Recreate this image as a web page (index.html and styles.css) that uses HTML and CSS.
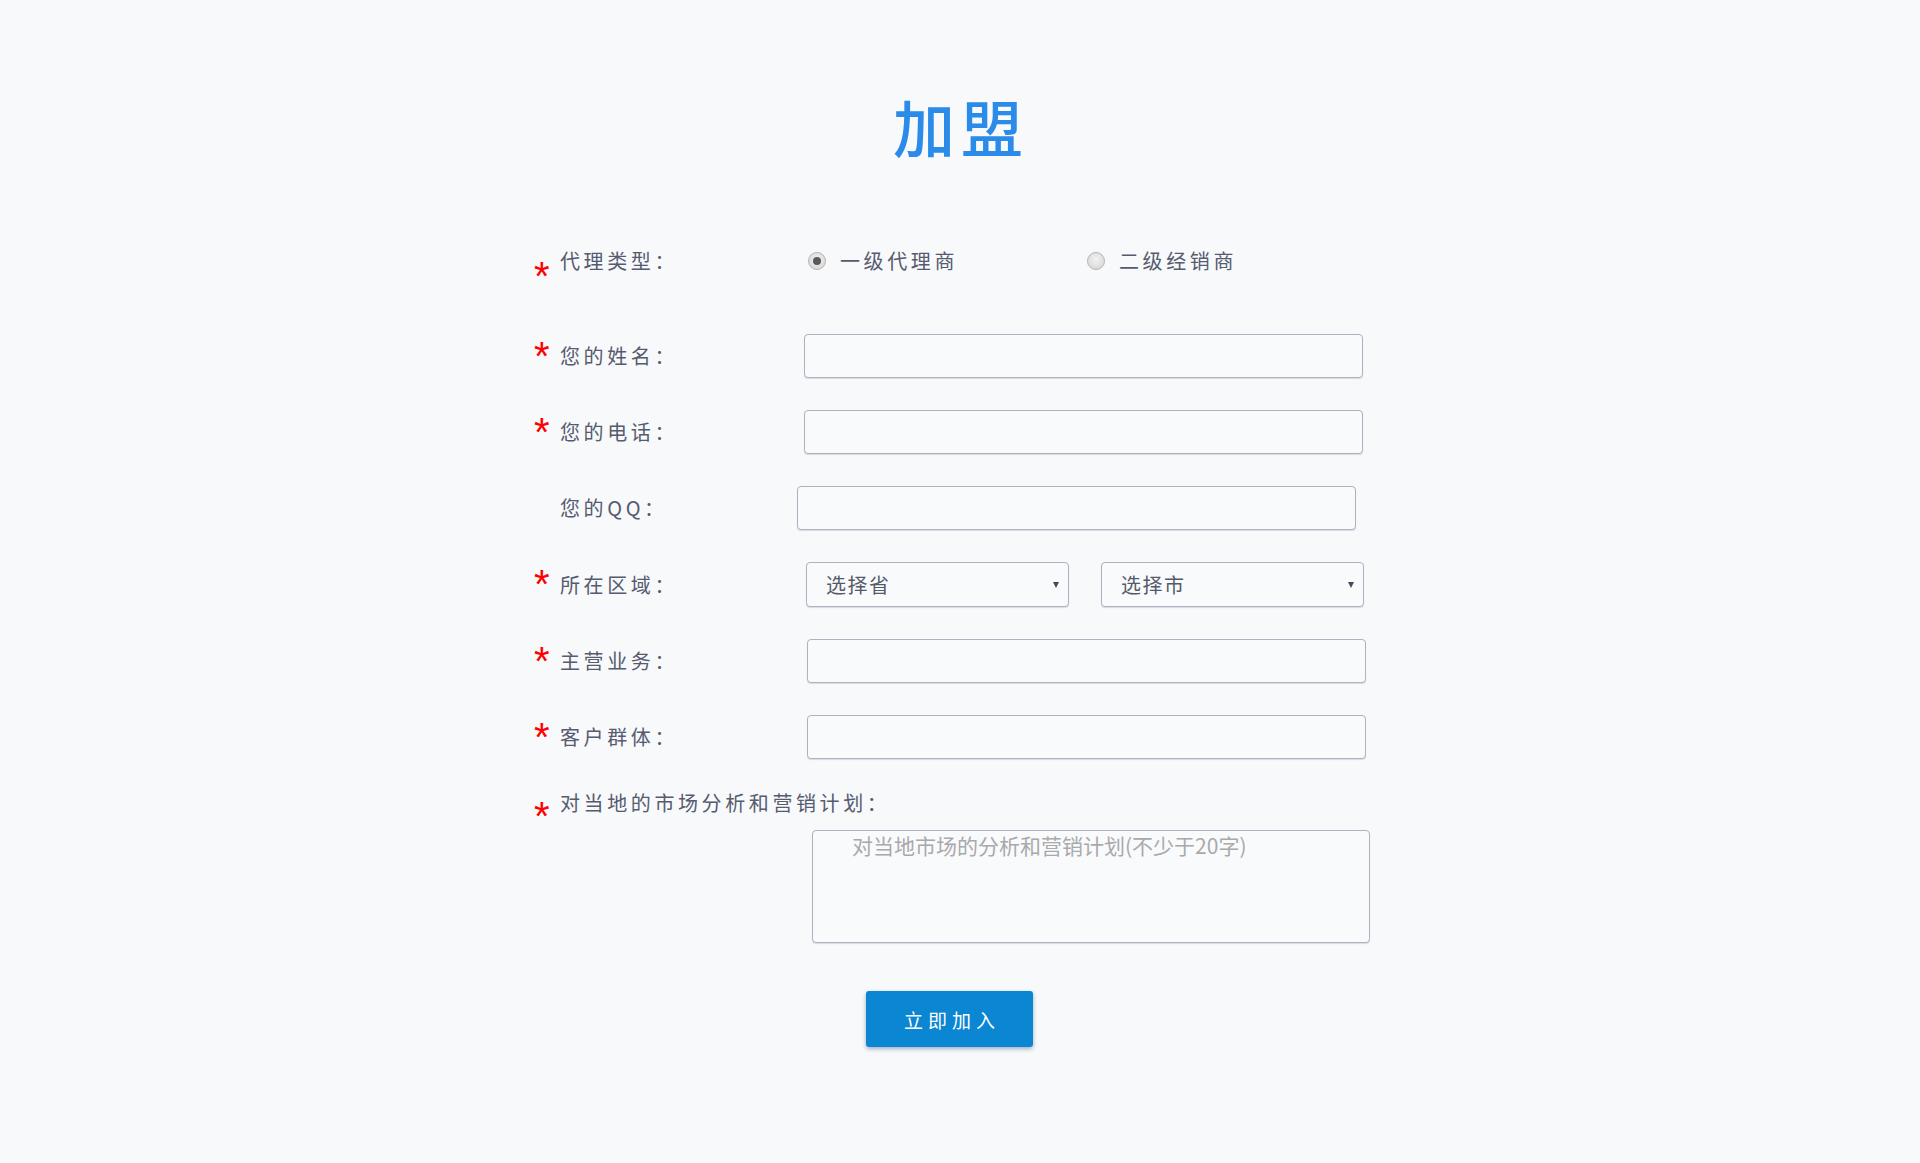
FILE: index.html
```html
<!DOCTYPE html>
<html lang="zh-CN">
<head>
<meta charset="utf-8">
<title>加盟</title>
<link rel="stylesheet" href="styles.css">
</head>
<body>
<div class="page">
  <h1 class="title">加盟</h1>
  <form class="form">
    <div class="row row-type">
      <div class="lab"><span class="star star-low">*</span><span class="lab-text">代理类型：</span></div>
      <div class="radios">
        <label class="opt opt-first"><input type="radio" name="type" class="radio" checked><span class="opt-text">一级代理商</span></label>
        <label class="opt"><input type="radio" name="type" class="radio"><span class="opt-text">二级经销商</span></label>
      </div>
    </div>
    <div class="row">
      <div class="lab"><span class="star">*</span><span class="lab-text">您的姓名：</span></div>
      <input type="text" class="input">
    </div>
    <div class="row">
      <div class="lab"><span class="star">*</span><span class="lab-text">您的电话：</span></div>
      <input type="text" class="input">
    </div>
    <div class="row">
      <div class="lab"><span class="star star-empty"></span><span class="lab-text">您的QQ：</span></div>
      <input type="text" class="input input-qq">
    </div>
    <div class="row">
      <div class="lab"><span class="star">*</span><span class="lab-text">所在区域：</span></div>
      <div class="selects">
        <span class="sel"><select class="select"><option>选择省</option></select></span>
        <span class="sel"><select class="select"><option>选择市</option></select></span>
      </div>
    </div>
    <div class="row">
      <div class="lab"><span class="star">*</span><span class="lab-text">主营业务：</span></div>
      <input type="text" class="input input-biz">
    </div>
    <div class="row">
      <div class="lab"><span class="star">*</span><span class="lab-text">客户群体：</span></div>
      <input type="text" class="input input-biz">
    </div>
    <div class="row row-plan">
      <div class="lab lab-wide"><span class="star star-mid">*</span><span class="lab-text">对当地的市场分析和营销计划：</span></div>
    </div>
    <textarea class="area" placeholder="对当地市场的分析和营销计划(不少于20字)"></textarea>
    <button type="button" class="btn">立即加入</button>
  </form>
</div>
</body>
</html>
```
FILE: styles.css
```css
* { box-sizing: border-box; }
html, body { margin: 0; padding: 0; }
body {
  background: #f7f9fb;
  font-family: "Noto Sans CJK SC", "Noto Sans", sans-serif;
  color: #585d70;
}
.page {
  padding-top: 95px;
  min-height: 1163px;
}
.title {
  margin: 0;
  text-align: center;
  font-size: 62px;
  line-height: 62px;
  letter-spacing: 6px;
  padding-left: 2px;
  font-weight: 500;
  color: #2b8be8;
}
.form {
  width: 852px;
  margin: 89px auto 0;
  display: flex;
  flex-direction: column;
}
.row {
  display: flex;
  align-items: center;
  min-height: 44px;
}
.row + .row { margin-top: 32px; }
.row-type { min-height: 30px; }
.row-type + .row { margin-top: 58px; }
.row-plan { min-height: 30px; }
.row + .row-plan { margin-top: 29px; }
.lab {
  width: 270px;
  flex: none;
  display: flex;
  align-items: center;
  height: 30px;
}
.lab-wide { width: auto; }
.star {
  display: block;
  width: 26px;
  flex: none;
  height: 24px;
  line-height: 24px;
  font-family: "Liberation Sans", Arial, sans-serif;
  font-size: 40px;
  color: #ff0000;
  margin-top: -1px;
  overflow: visible;
}
.star-low { margin-top: 30px; }
.star-mid { margin-top: 25px; }
.star-empty { margin-top: 0; }
.lab-text, .opt-text {
  font-size: 20px;
  line-height: 24px;
  letter-spacing: 3.6px;
  color: #565b6f;
  white-space: nowrap;
}
.radios {
  display: flex;
  align-items: center;
  padding-left: 4px;
}
.opt {
  display: flex;
  align-items: center;
  gap: 14px;
}
.opt-first { width: 279px; }
.radio {
  -webkit-appearance: none;
  appearance: none;
  margin: 0;
  width: 18px;
  height: 18px;
  border-radius: 50%;
  border: 1px solid #b4b4b4;
  background: radial-gradient(circle at 50% 40%, #f2f2f2 0%, #dcdcdc 70%, #cfcfcf 100%);
  display: grid;
  place-items: center;
}
.radio:checked::after {
  content: "";
  width: 8px;
  height: 8px;
  border-radius: 50%;
  background: #5a5a5a;
}
.input {
  width: 559px;
  height: 44px;
  border: 1px solid #aeb3c1;
  border-radius: 4px;
  background: #f9fafc;
  box-shadow: 0 1px 1px rgba(40, 50, 80, 0.15);
  font-family: inherit;
  font-size: 19px;
  outline: none;
}
.input-qq { margin-left: -7px; }
.input-biz { margin-left: 3px; }
.selects {
  display: flex;
  gap: 32px;
  margin-left: 2px;
}
.sel {
  position: relative;
  display: block;
}
.sel::after {
  content: "";
  position: absolute;
  right: 10px;
  top: 20px;
  border-left: 3.5px solid transparent;
  border-right: 3.5px solid transparent;
  border-top: 6px solid #444a5c;
  pointer-events: none;
}
.select {
  -webkit-appearance: none;
  appearance: none;
  width: 263px;
  height: 45px;
  border: 1px solid #aeb3c1;
  border-radius: 4px;
  background: #f9fafc;
  box-shadow: 0 1px 1px rgba(40, 50, 80, 0.15);
  padding: 0 20px 0 19px;
  font-family: inherit;
  font-size: 20px;
  letter-spacing: 1.5px;
  color: #555a6a;
  outline: none;
}
.area {
  display: block;
  margin: 12px 0 0 278px;
  width: 558px;
  height: 113px;
  border: 1px solid #aeb3c1;
  border-radius: 4px;
  background: #f9fafc;
  box-shadow: 0 1px 1px rgba(40, 50, 80, 0.15);
  padding: 2px 10px 0 39px;
  font-family: inherit;
  font-size: 21px;
  line-height: 24px;
  resize: none;
  outline: none;
}
.area::placeholder { color: #a9a9ab; }
.btn {
  margin: 48px 0 0 332px;
  align-self: flex-start;
  width: 167px;
  height: 56px;
  border: none;
  border-radius: 3px;
  background: #0a86d2;
  box-shadow: 0 2px 4px rgba(0, 40, 90, 0.35);
  color: #ffffff;
  font-family: inherit;
  font-size: 19px;
  letter-spacing: 5px;
  padding: 0 0 0 5px;
  cursor: pointer;
}
```
